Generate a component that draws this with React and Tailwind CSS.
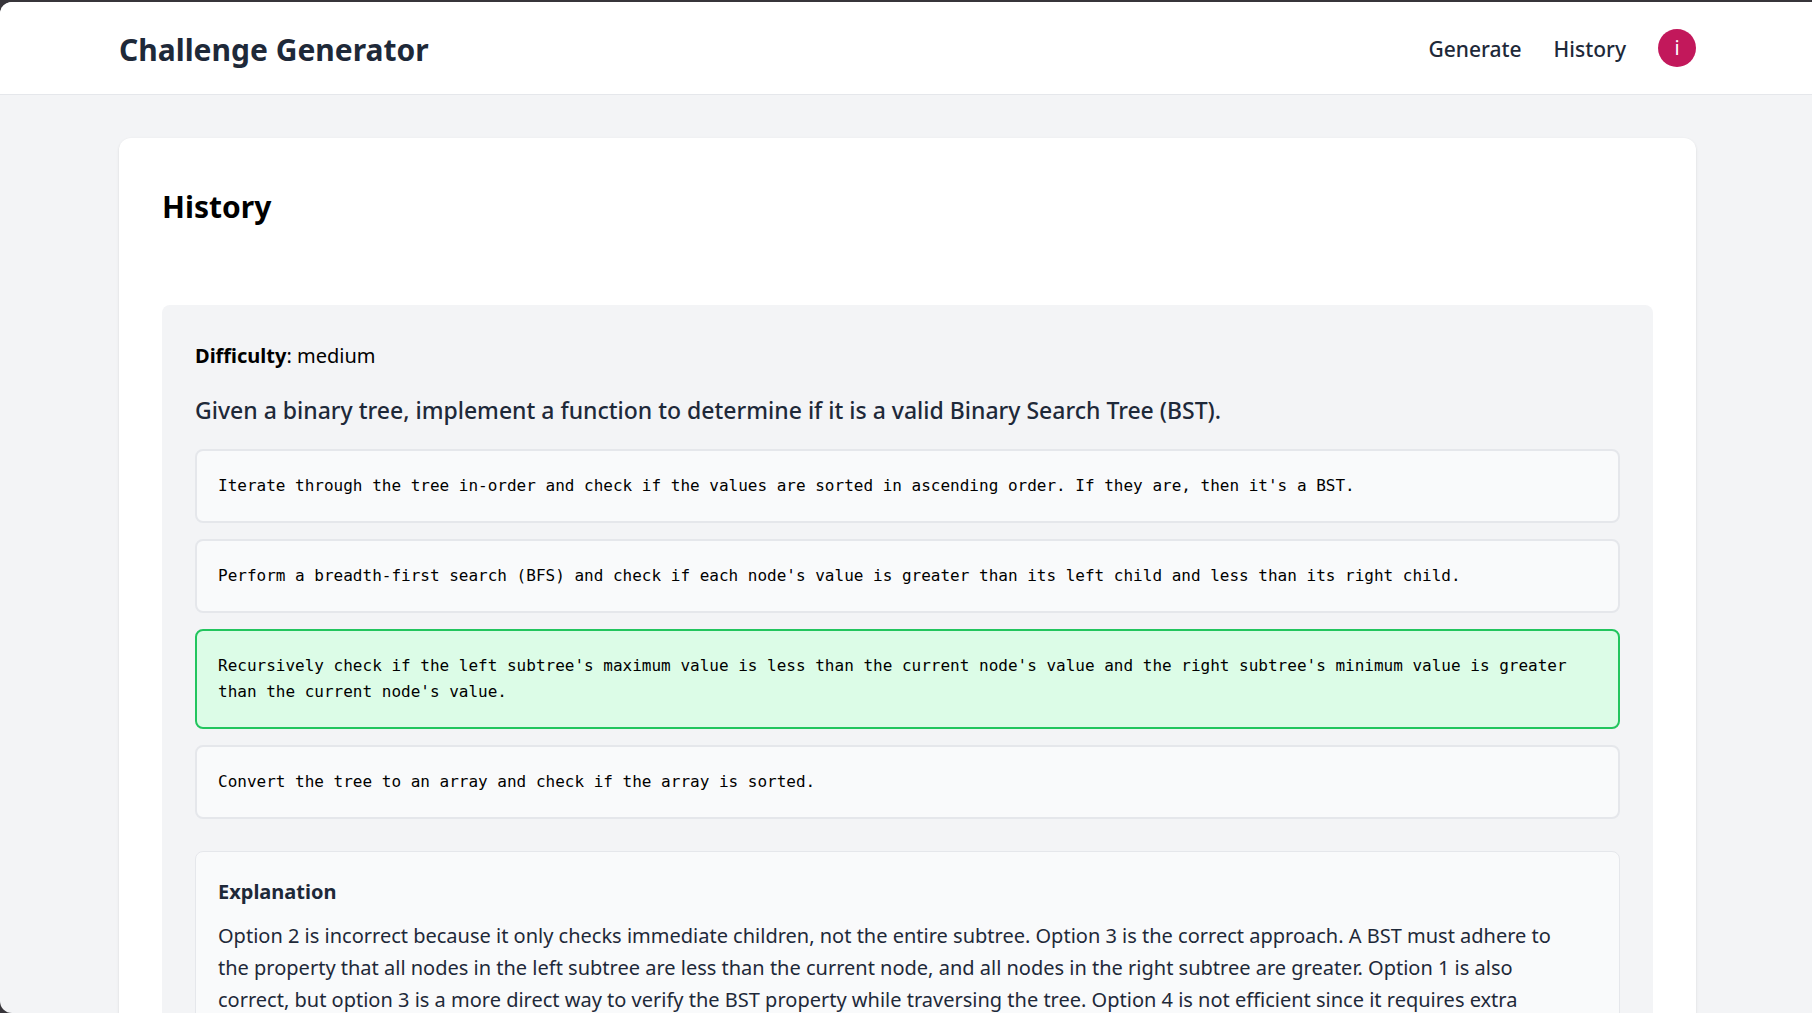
const options = [
  "Iterate through the tree in-order and check if the values are sorted in ascending order. If they are, then it's a BST.",
  "Perform a breadth-first search (BFS) and check if each node's value is greater than its left child and less than its right child.",
  "Recursively check if the left subtree's maximum value is less than the current node's value and the right subtree's minimum value is greater than the current node's value.",
  "Convert the tree to an array and check if the array is sorted.",
];

const correctOption = 2;

function Header() {
  return (
    <header className="border-b border-gray-200 bg-white py-6 pr-5 pl-[23px]">
      <div className="mx-auto flex h-11 max-w-[1577px] items-center justify-between">
        <h1 className="pt-1 text-[30px] leading-10 font-bold">Challenge Generator</h1>
        <nav className="flex items-center gap-8 text-[21px] leading-8 font-medium">
          <a href="#generate" className="pt-0.5">Generate</a>
          <a href="#history" className="pt-0.5">History</a>
          <button
            type="button"
            aria-label="Account"
            className="flex size-[38px] items-center justify-center rounded-full bg-[#c2185b] text-[20px] leading-6 font-normal text-white"
          >
            i
          </button>
        </nav>
      </div>
    </header>
  );
}

function Option({ text, correct }) {
  return (
    <li
      className={
        correct
          ? "rounded-lg border-2 border-[#22c55e] bg-[#dcfce7] px-[21px] py-[22px]"
          : "rounded-lg border-2 border-gray-200 bg-gray-50 px-[21px] py-[22px]"
      }
    >
      {text}
    </li>
  );
}

function Challenge() {
  return (
    <article className="rounded-lg bg-gray-100 px-[33px] py-8">
      <p className="text-[20px] leading-[38px] text-black">
        <strong className="font-bold">Difficulty</strong>: medium
      </p>
      <h3 className="mt-3 text-[23px] leading-[46px] font-medium">
        Given a binary tree, implement a function to determine if it is a valid Binary Search Tree (BST).
      </h3>
      <ul className="mt-4 flex flex-col gap-4 font-['DejaVu_Sans_Mono',monospace] text-[16px] leading-[26px] text-black">
        {options.map((text, index) => (
          <Option key={text} text={text} correct={index === correctOption} />
        ))}
      </ul>
      <section className="mt-8 rounded-lg border border-gray-200 bg-gray-50 py-6 pr-10 pl-[22px]">
        <h4 className="text-[20px] leading-8 font-bold">Explanation</h4>
        <p className="mt-3 text-[20px] leading-8">
          Option 2 is incorrect because it only checks immediate children, not the entire subtree. Option 3 is the
          correct approach. A BST must adhere to the property that all nodes in the left subtree are less than the
          current node, and all nodes in the right subtree are greater. Option 1 is also correct, but option 3 is a
          more direct way to verify the BST property while traversing the tree. Option 4 is not efficient since it
          requires extra
        </p>
      </section>
    </article>
  );
}

export default function App() {
  return (
    <div className="h-screen bg-[#37353a] pt-0.5">
      <div className="h-full overflow-hidden rounded-l-xl bg-gray-100 font-['Noto_Sans',sans-serif] text-gray-800">
        <Header />
        <main className="pt-[43px] pr-5 pl-[23px]">
          <div className="mx-auto max-w-[1577px] rounded-xl bg-white p-[43px] shadow-sm">
            <h2 className="mb-[76px] pt-1 text-[30px] leading-[44px] font-bold text-black">History</h2>
            <Challenge />
          </div>
        </main>
      </div>
    </div>
  );
}
